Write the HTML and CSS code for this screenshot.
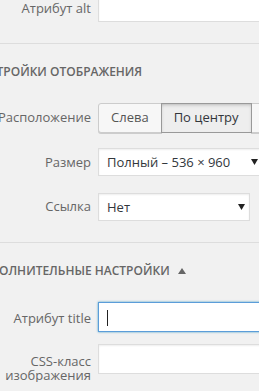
FILE: index.html
```html
<!DOCTYPE html>
<html lang="ru">
<head>
    <meta charset="UTF-8">
    <meta name="viewport" content="width=device-width, initial-scale=1.0">
    <title>Параметры изображения</title>
    <link rel="stylesheet" href="styles.css">
</head>
<body>
    <div class="panel">
        <div class="setting row-alt">
            <label class="setting-label" for="alt-text">Атрибут alt</label>
            <input type="text" id="alt-text" class="field">
        </div>

        <div class="divider"></div>

        <h2 class="section-title">Настройки отображения</h2>

        <div class="setting row-align">
            <span class="setting-label label-btn">Расположение</span>
            <div class="button-group">
                <button class="btn btn-first">Слева</button>
                <button class="btn active">По центру</button>
                <button class="btn btn-last">Справа</button>
            </div>
        </div>

        <div class="setting row-size">
            <label class="setting-label label-btn">Размер</label>
            <div class="select select-size">
                <span>Полный – 536 × 960</span>
                <svg class="arrow" width="7" height="6" viewBox="0 0 7 6"><path d="M0 0H7L3.5 6Z" fill="#222"/></svg>
            </div>
        </div>

        <div class="setting row-link">
            <label class="setting-label label-link">Ссылка</label>
            <div class="select select-link">
                <span>Нет</span>
                <svg class="arrow" width="7" height="6" viewBox="0 0 7 6"><path d="M0 0H7L3.5 6Z" fill="#222"/></svg>
            </div>
        </div>

        <div class="divider"></div>

        <h2 class="section-title">Дополнительные настройки<svg class="toggle" width="8" height="6" viewBox="0 0 8 6"><path d="M0 6H8L4 0Z" fill="#666"/></svg></h2>

        <div class="setting row-title">
            <label class="setting-label" for="title-attr">Атрибут title</label>
            <div class="field-wrap">
                <input type="text" id="title-attr" class="field focus">
                <span class="caret"></span>
            </div>
        </div>

        <div class="setting row-css">
            <label class="setting-label label-css" for="css-class">CSS-класс изображения</label>
            <input type="text" id="css-class" class="field">
        </div>
    </div>
</body>
</html>
```

FILE: styles.css
```css
body { margin: 0; background: #f1f1f1; font-family: "Open Sans", "DejaVu Sans", sans-serif; font-size: 13px; color: #666; overflow: hidden; }
.panel { margin: -8px 0 0 -28px; width: 360px; }
.setting { display: flex; align-items: flex-start; }
.setting-label { width: 126px; flex: none; box-sizing: border-box; padding: 9px 7px 0 0; text-align: right; line-height: 14px; }
.label-btn { padding-top: 7px; }
.label-link { padding-top: 6px; }
.label-css { padding-top: 10px; }
.row-alt { margin-bottom: 21px; }
.row-align { margin: 1px 0 15px; }
.row-size { margin-bottom: 17px; }
.row-link { margin-bottom: 21px; }
.row-title { margin-bottom: 12px; }
.divider { border-top: 1px solid #ddd; }
.section-title { margin: 19px 0 22px; font-size: 12px; line-height: 18px; font-weight: 600; text-transform: uppercase; color: #666; }
.toggle { margin-left: 8px; vertical-align: 1px; }
.field { width: 220px; height: 30px; box-sizing: border-box; margin: 0; padding: 0 8px; border: 1px solid #ddd; background: #fff; box-shadow: inset 0 1px 2px rgba(0,0,0,0.07); font: inherit; outline: none; }
.field.focus { border-color: #5b9dd9; box-shadow: 0 0 2px rgba(30,140,190,0.8); }
.field-wrap { position: relative; }
.caret { position: absolute; left: 9px; top: 8px; width: 1px; height: 16px; background: #222; }
.button-group { display: flex; }
.btn { height: 30px; margin: 0 0 0 -1px; padding: 0 12px 2px; border: 1px solid #ccc; border-radius: 0; background: #f7f7f7; color: #555; font: inherit; line-height: 26px; box-shadow: 0 1px 0 #ccc; white-space: nowrap; }
.btn-first { margin-left: 0; border-radius: 3px 0 0 3px; }
.btn-last { border-radius: 0 3px 3px 0; }
.btn.active { position: relative; background: #eee; border-color: #999; color: #32373c; box-shadow: inset 0 2px 5px -3px rgba(0,0,0,0.5); }
.select { display: flex; align-items: center; justify-content: space-between; height: 28px; box-sizing: border-box; padding: 0 4px 0 8px; border: 1px solid #ddd; background: #fff; box-shadow: inset 0 1px 2px rgba(0,0,0,0.07); color: #32373c; }
.select-size { width: 165px; }
.select-link { width: 152px; }
```
